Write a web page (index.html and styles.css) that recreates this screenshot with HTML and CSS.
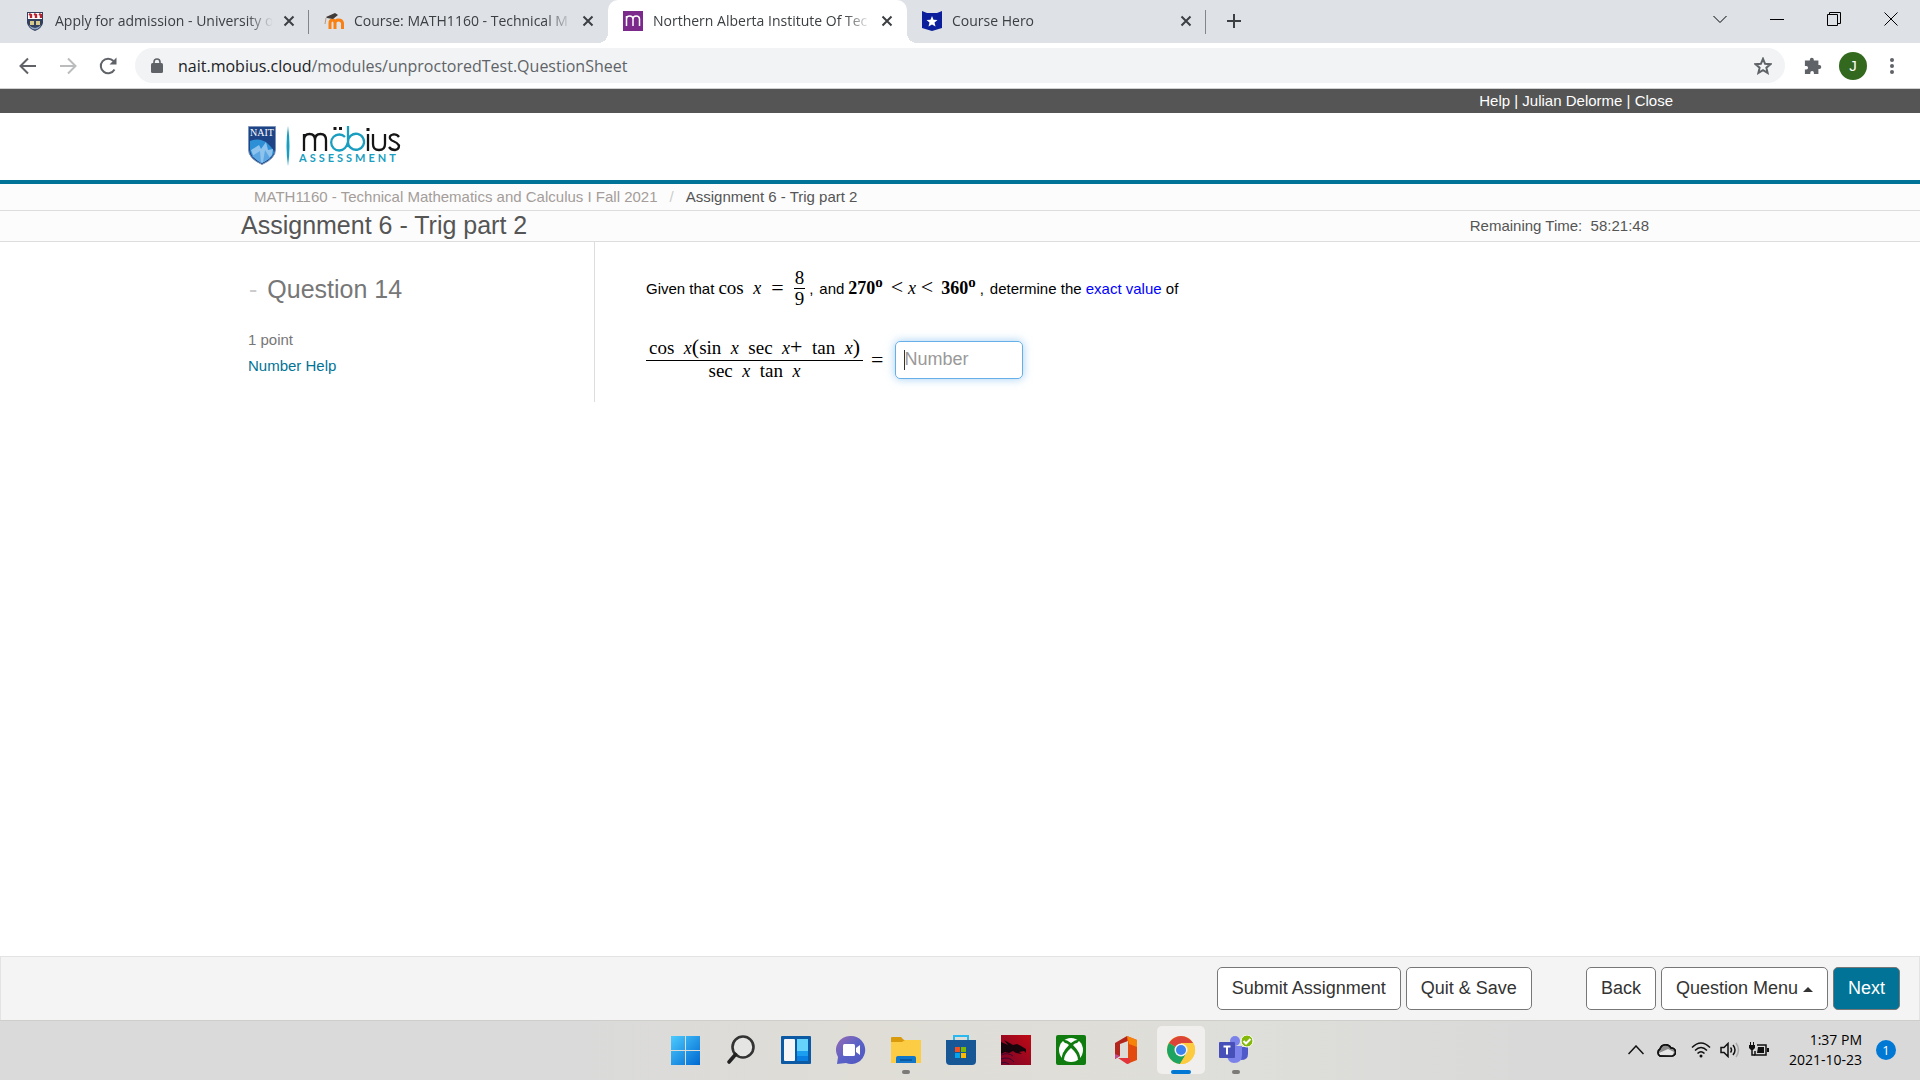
FILE: index.html
```
<!DOCTYPE html>
<html lang="en">
<head>
    <meta charset="UTF-8">
    <meta name="viewport" content="width=device-width, initial-scale=1.0">
    <title>Northern Alberta Institute Of Technology</title>
    <link rel="stylesheet" href="styles.css">
</head>
<body>

    <!-- Browser tabs -->
    <header class="tab-strip">
        <div class="tab">
            <svg class="favicon" viewBox="0 0 20 20"><path d="M2 1h16v11q-1 5-8 8q-7-3-8-8z" fill="#33415f"/><path d="M3 2h14v6H3z" fill="#fff"/><path d="M4 3l2 1v3M9 3l2 1v3M14 3l2 1v3" stroke="#b8202e" stroke-width="2.4" fill="none"/><path d="M5 10h4v4H5zM11 10h4v4h-4z" fill="#d8c98d"/><path d="M4 14q6 6 12 0l-1 2q-5 5-10 0z" fill="#8fa3c4"/></svg>
            <span class="tab-title">Apply for admission - University o</span>
            <button class="tab-close" aria-label="Close tab"><svg viewBox="0 0 12 12"><path d="M1.500 1.500l9 9M10.500 1.500l-9 9"/></svg></button>
        </div>
        <div class="tab">
            <svg class="favicon" viewBox="0 0 20 20"><path d="M6 18v-6q0-3 2.500-3T11 12v6M11 18v-6q0-3 3.500-3t4 3v6" fill="none" stroke="#f98012" stroke-width="3"/><path d="M2 6l9-4 3 2-5 4-6-1z" fill="#3f3a38"/><path d="M2 7l-1 6" stroke="#b89a80"/></svg>
            <span class="tab-title">Course: MATH1160 - Technical M</span>
            <button class="tab-close" aria-label="Close tab"><svg viewBox="0 0 12 12"><path d="M1.500 1.500l9 9M10.500 1.500l-9 9"/></svg></button>
        </div>
        <div class="tab active">
            <svg class="favicon" viewBox="0 0 20 20"><path d="M0 0h20v20H0z" fill="#7b2a8c"/><path d="M3.500 15V5M3.500 8q0-3 3.200-3T10 8v7M10 8q0-3 3.200-3t3.300 3v7" fill="none" stroke="#fff" stroke-width="1.500"/></svg>
            <span class="tab-title">Northern Alberta Institute Of Tec</span>
            <button class="tab-close" aria-label="Close tab"><svg viewBox="0 0 12 12"><path d="M1.500 1.500l9 9M10.500 1.500l-9 9"/></svg></button>
        </div>
        <div class="tab">
            <svg class="favicon" viewBox="0 0 20 20"><path d="M0 0l5 2h10l5-2v17l-10 3-10-3z" fill="#0b1f9c"/><path d="M10 5l1.500 3.700 4 .3-3 2.600 1 3.900-3.500-2.100-3.500 2.100 1-3.900-3-2.600 4-.3z" fill="#fff"/></svg>
            <span class="tab-title">Course Hero</span>
            <button class="tab-close" aria-label="Close tab"><svg viewBox="0 0 12 12"><path d="M1.500 1.500l9 9M10.500 1.500l-9 9"/></svg></button>
        </div>
        <button class="new-tab" aria-label="New tab"><svg viewBox="0 0 16 16"><path d="M8 1v14M1 8h14"/></svg></button>
        <div class="window-controls">
            <button aria-label="Search tabs"><svg viewBox="0 0 14 14"><path d="M.5 4l6.500 6.500L13.500 4"/></svg></button>
            <button aria-label="Minimize"><svg viewBox="0 0 14 14"><path d="M0 7.500h14"/></svg></button>
            <button aria-label="Restore"><svg viewBox="0 0 14 14"><path d="M.5 2.500h10v11H.5zM2.500 2.500v-2h11v11h-3"/></svg></button>
            <button aria-label="Close window"><svg viewBox="0 0 14 14"><path d="M.5.5l13 13M13.500.5l-13 13"/></svg></button>
        </div>
    </header>

    <!-- Address bar -->
    <nav class="toolbar">
        <button class="tool" aria-label="Back"><svg viewBox="0 0 20 20"><path d="M18 10H3M10 2.500L2.500 10l7.500 7.500"/></svg></button>
        <button class="tool disabled" aria-label="Forward"><svg viewBox="0 0 20 20"><path d="M2 10h15M10 2.500l7.500 7.500-7.500 7.500"/></svg></button>
        <button class="tool" aria-label="Reload"><svg viewBox="0 0 20 20"><path d="M16.500 13.500A7.300 7.300 0 1 1 15.500 5"/><path d="M18.500 1.500v7h-7z" fill="#5f6368" stroke="none"/></svg></button>
        <div class="address">
            <svg class="lock" viewBox="0 0 12 16"><rect y="5" width="12" height="10" rx="1.500" fill="#5f6368"/><path d="M3 6V4a3 3 0 0 1 6 0v2" fill="none" stroke="#5f6368" stroke-width="1.600"/></svg>
            <span class="url"><b>nait.mobius.cloud</b>/modules/unproctoredTest.QuestionSheet</span>
            <button class="bookmark" aria-label="Bookmark"><svg viewBox="0 0 18 18"><path d="M9 1.800l2.100 5 5.300.4-4 3.500 1.200 5.200L9 13.100l-4.600 2.800 1.200-5.200-4-3.500 5.300-.4z"/></svg></button>
        </div>
        <button class="puzzle" aria-label="Extensions"><svg viewBox="0 0 20 20"><path d="M1 4h5.500V3a2.200 2.200 0 0 1 4.400 0v1H16v5h1a2.200 2.200 0 0 1 0 4.400h-1V19h-5v-1.500a2 2 0 0 0-4 0V19H1v-5h1.500a2 2 0 0 0 0-4H1z"/></svg></button>
        <button class="avatar">J</button>
        <button class="more" aria-label="Menu"><i></i><i></i><i></i></button>
    </nav>

    <div class="account-bar">
        <a href="#">Help</a> | <a href="#">Julian Delorme</a> | <a href="#">Close</a>
    </div>

    <div class="brand">
        <svg class="shield" viewBox="0 0 28 39"><path d="M.5.5h27v23q0 9-13.500 15Q.5 32.500.5 23.500z" fill="#1c4486" stroke="#7d93b8"/><path d="M2 15q10-4 17 2t7 10q-3 6-12 10Q2 32 2 23z" fill="#2d8fd6"/><path d="M3 24l8-5 2 4 5-7 2 8 5-1-1 6q-3 4-10 8Q5 33 3 24z" fill="#8ec3ee"/><path d="M4 30l8-5 1 12zM17 24l5 8-7 4z" fill="#5ba6e2"/><text x="14" y="10" text-anchor="middle" class="shield-text">NAIT</text></svg>
        <svg class="divider" viewBox="0 0 4 40"><path d="M2 0q3 20 0 40Q-1 20 2 0" fill="#1a9ec0"/></svg>
        <div class="wordmark">
            <svg viewBox="0 0 100 26" fill="none" stroke="#151515" stroke-width="2.300" role="img" aria-label="möbius"><path d="M2 25V8M2 14q0-6 5.500-6T13 14v11M13 14q0-6 5.500-6T24 14v11"/><path d="M43 11a8 8 0 1 0 0 11q2-2 3-6a8 8 0 1 1 3 6q-3-2-3-6V0" stroke="#1a9ec0"/><path d="M66 8v17M71 8v10q0 6 6 6t6-6V8M97 11q-2-3-6-2.500-4 1-3 4 1 2 4 3t5 4q0 4-4 4.500-4 0-6-3"/><path d="M66 2v3M33 1v3M38.500 1v3" stroke-width="3"/></svg>
            <span>ASSESSMENT</span>
        </div>
    </div>

    <div class="breadcrumb"><a href="#">MATH1160 - Technical Mathematics and Calculus I Fall 2021</a><i>/</i><span>Assignment 6 - Trig part 2</span></div>

    <div class="title-bar">
        <h1>Assignment 6 - Trig part 2</h1>
        <div class="timer">Remaining Time: &nbsp;58:21:48</div>
    </div>

    <main class="content">
        <aside class="question-info">
            <h2><i>-</i>Question 14</h2>
            <p>1 point</p>
            <a href="#">Number Help</a>
        </aside>
        <section class="question">
            <div class="prompt">
                <span>Given that</span>
                <span class="math">cos&ensp;<em>x</em></span>
                <span class="math equals">=</span>
                <span class="math fraction"><span>8</span><span>9</span></span>
                <span class="comma">,</span>
                <span>and</span>
                <span class="math strong">270<sup>o</sup></span>
                <span class="math inequality"><b>&lt;</b> <em>x</em> <b>&lt;</b></span>
                <span class="math strong">360<sup>o</sup></span>
                <span class="comma">,</span>
                <span>determine the <a href="#">exact value</a> of</span>
            </div>
            <div class="answer">
                <label class="math fraction expression" for="answer">
                    <span>cos&ensp;<em>x</em><b>(</b>sin&ensp;<em>x</em>&ensp;sec&ensp;<em>x</em><b>+</b>&ensp;tan&ensp;<em>x</em><b>)</b></span>
                    <span>sec&ensp;<em>x</em>&ensp;tan&ensp;<em>x</em></span>
                </label>
                <span class="math equals">=</span>
                <input type="text" id="answer" class="number-input" placeholder="Number" autofocus>
            </div>
        </section>
    </main>

    <footer class="actions">
        <button class="btn">Submit Assignment</button>
        <button class="btn">Quit &amp; Save</button>
        <button class="btn back">Back</button>
        <button class="btn">Question Menu <i class="caret"></i></button>
        <button class="btn primary">Next</button>
    </footer>

    <!-- Windows taskbar -->
    <div class="taskbar">
        <div class="apps">
            <button class="app" aria-label="Start"><svg viewBox="0 0 30 30"><defs><linearGradient id="win" x2="1" y2="1"><stop stop-color="#4ccbff"/><stop offset="1" stop-color="#0068d0"/></linearGradient></defs><path d="M0 1h14v14H0zM15 1h14v14H15zM0 16h14v14H0zM15 16h14v14H15z" fill="url(#win)"/></svg></button>
            <button class="app" aria-label="Search"><svg viewBox="0 0 30 30"><circle cx="17" cy="12" r="10.500" fill="#e5e5e4" stroke="#333" stroke-width="2.600"/><path d="M9.500 19.500L3 27" stroke="#222" stroke-width="3.600" stroke-linecap="round"/></svg></button>
            <button class="app" aria-label="Widgets"><svg viewBox="0 0 30 30"><rect y="1" width="30" height="28" rx="1" fill="#0c59a4"/><rect x="3" y="4" width="11" height="22" rx="1" fill="#f6f6f6"/><path d="M16 4h11v12H16z" fill="#66d3fa"/><path d="M16 16h11v5H16z" fill="#1b9df0"/><path d="M16 21h11v5H16z" fill="#0a7fe2"/></svg></button>
            <button class="app" aria-label="Chat"><svg viewBox="0 0 30 30"><defs><linearGradient id="chat" x2="1" y2="1"><stop stop-color="#9a6bb0"/><stop offset=".5" stop-color="#5b62c7"/><stop offset="1" stop-color="#4d55c0"/></linearGradient></defs><path d="M15 1a14 14 0 1 1-5 27l-9 1 1-7A14 14 0 0 1 15 1z" fill="url(#chat)"/><rect x="7" y="9" width="12" height="12" rx="1.500" fill="#fff"/><path d="M20 13l4-3v10l-4-3z" fill="#fff"/></svg></button>
            <button class="app running" aria-label="File Explorer"><svg viewBox="0 0 30 30"><path d="M0 3q0-1 1-1h9l3 3h17v8H0z" fill="#d99b0c"/><path d="M0 7h11l3-2h16v23H0z" fill="#fccc45"/><path d="M5 28v-5q0-2 2-2h16q2 0 2 2v5z" fill="#1177c9"/><path d="M9 25h12" stroke="#0a4f94" stroke-width="1.500"/></svg></button>
            <button class="app" aria-label="Microsoft Store"><svg viewBox="0 0 30 30"><path d="M8 6V1h14v5" fill="none" stroke="#27b9f0" stroke-width="2"/><path d="M0 5h30v21q0 4-4 4H4q-4 0-4-4z" fill="#175796"/><path d="M9 12h5v5H9z" fill="#f25022"/><path d="M15 12h5v5h-5z" fill="#7fba00"/><path d="M9 18h5v5H9z" fill="#00a4ef"/><path d="M15 18h5v5h-5z" fill="#ffb900"/></svg></button>
            <button class="app" aria-label="Dragon"><svg viewBox="0 0 30 30"><defs><linearGradient id="dragon" x1="1" x2="0" y2="1"><stop stop-color="#c00a14"/><stop offset="1" stop-color="#780528"/></linearGradient></defs><path d="M0 0h30v30H0z" fill="url(#dragon)"/><path d="M0 7l7 3-4-5 9 5 4-1 4 2 5 3 0 4-2-2-5 1 3 2-6-1-3-2-4 2-4-1-4 2z" fill="#16060c"/><path d="M0 20q7-3 12 1M0 24q8-3 13 3M0 28q4-2 8 1" stroke="#3d0630" fill="none"/></svg></button>
            <button class="app" aria-label="Xbox"><svg viewBox="0 0 30 30"><rect width="30" height="30" rx="2" fill="#107c10"/><circle cx="15" cy="15" r="12" fill="#fff"/><path d="M6 5q4-1 9 3 5-4 9-3l-3 3q-2 0-4 2 8 8 7 14l-2 1q0-6-7-12-7 6-7 12l-2-1q-1-6 7-14-2-2-4-2z" fill="#107c10"/></svg></button>
            <button class="app" aria-label="Office"><svg viewBox="0 0 30 30"><path d="M4 8L16 1v6l-7 3v11l-5 3z" fill="#b3261e"/><path d="M4 19l5 2-5 3z" fill="#c24b92"/><path d="M16 1l10 4v20l-10 4z" fill="#e24a0e"/><path d="M16 1l10 4v7l-8-3z" fill="#f7840a"/><path d="M9 9l8-3v17H9z" fill="#dedcd9"/><path d="M7 23h12v5l-3 1z" fill="#e3343b"/></svg></button>
            <button class="app current" aria-label="Chrome"><svg viewBox="0 0 30 30"><circle cx="15" cy="15" r="14" fill="#fbc934"/><path d="M15 15L2.900 8A14 14 0 0 1 27.100 8H15z" fill="#dc4437"/><path d="M15 15L2.900 8a14 14 0 0 0 11.100 21l7-12z" fill="#1da462"/><path d="M15 8h12.100A14 14 0 0 1 14 29l7-11z" fill="#fdcb3f"/><circle cx="15" cy="15" r="6.500" fill="#f5f3f0"/><circle cx="15" cy="15" r="5" fill="#3d82ee"/></svg></button>
            <button class="app running" aria-label="Teams"><svg viewBox="0 0 36 30"><circle cx="17" cy="6" r="5" fill="#7b83eb"/><path d="M20 12h10v7q0 6-7 6z" fill="#5059c9"/><path d="M9 11h15v9q0 8-8 8-6 0-7-8z" fill="#7b83eb"/><rect x="1" y="7" width="16" height="16" rx="1" fill="#4650b8"/><path d="M5.500 11.500h7M9 11.500v8" stroke="#fff" stroke-width="2"/><circle cx="29" cy="6" r="6" fill="#84b80b" stroke="#fff"/><path d="M25.500 6l2.500 2.500 4.500-4.500" fill="none" stroke="#fff" stroke-width="2"/></svg></button>
        </div>
        <div class="tray">
            <svg class="tray-up" viewBox="0 0 16 10"><path d="M.5 9L8 1l7.500 8"/></svg>
            <svg class="tray-cloud" viewBox="0 0 20 16"><path d="M4 14a4 4 0 0 1 0-7 6 6 0 0 1 11-1 4 4 0 0 1 1 8z" fill="#8c8c8c"/><path d="M4 13l-1-2 9-4 6 3-2 4z" fill="#e7e7e7" stroke="none"/><path d="M4 14a4 4 0 0 1 0-7 6 6 0 0 1 11-1 4 4 0 0 1 1 8z"/></svg>
            <svg class="tray-wifi" viewBox="0 0 20 16"><path d="M1 5.500q9-9 18 0M4 8.500q6-6 12 0M6.500 11.500q3.500-3.500 7 0"/><circle cx="10" cy="14" r="1.500" fill="#111" stroke="none"/></svg>
            <svg class="tray-sound" viewBox="0 0 20 16"><path d="M1 5.500h3l4-4v13l-4-4H1zM10.500 5.500q2 2.500 0 5M13 3q4 5 0 10"/><path d="M16 1q5 7 0 14" stroke="#aaa"/></svg>
            <svg class="tray-battery" viewBox="0 0 20 16"><path d="M8 3h9v10H6V9"/><path d="M9 5h6v6H8zM18 6h2v4h-2zM0 3h6v3L4 8H2L0 6zM1 0h1v3H1zM4 0h1v3H4z" fill="#111" stroke="none"/><path d="M3 8v5h3"/></svg>
            <div class="clock">1:37 PM<br>2021-10-23</div>
            <span class="badge">1</span>
        </div>
    </div>

</body>
</html>
```
FILE: styles.css
```
* {
    box-sizing: border-box;
}

body {
    margin: 0;
    min-height: 100vh;
    display: flex;
    flex-direction: column;
    font-family: "Liberation Sans", Arial, sans-serif;
    font-size: 15px;
    color: #000;
    background-color: #fff;
}

a {
    color: inherit;
    text-decoration: none;
}

i {
    font-style: normal;
}

button {
    font-family: inherit;
    padding: 0;
    border: none;
    background: none;
    cursor: pointer;
}

svg {
    display: block;
    flex: none;
}

.tab-strip {
    height: 43px;
    display: flex;
    align-items: stretch;
    padding-left: 10px;
    background-color: #dee1e6;
    font-family: "Open Sans", "Noto Sans", sans-serif;
}

.tab {
    width: 299px;
    display: flex;
    align-items: center;
    padding: 0 14px 2px 15px;
    position: relative;
    color: #3c4043;
    font-size: 14px;
}

.tab:first-child::after,
.tab:nth-child(4)::after {
    content: "";
    position: absolute;
    right: 0;
    top: 10px;
    width: 1px;
    height: 24px;
    background-color: #80868b;
}

.tab.active {
    background-color: #fff;
    border-radius: 10px 10px 0 0;
}

.tab.active::before,
.tab.active::after {
    content: "";
    position: absolute;
    bottom: 0;
    width: 10px;
    height: 10px;
}

.tab.active::before {
    left: -10px;
    background: radial-gradient(circle at 0 0, transparent 10px, #fff 10px);
}

.tab.active::after {
    right: -10px;
    background: radial-gradient(circle at 100% 0, transparent 10px, #fff 10px);
}

.favicon {
    width: 20px;
    height: 20px;
    margin-right: 10px;
}

.tab-title {
    flex: 1;
    overflow: hidden;
    white-space: nowrap;
    line-height: 24px;
    margin-right: 10px;
    mask-image: linear-gradient(to right, #000 88%, transparent);
}

.tab-close {
    width: 12px;
    height: 12px;
}

.tab-close svg,
.new-tab svg {
    width: 100%;
    stroke: #3c4043;
    stroke-width: 2;
}

.new-tab {
    width: 16px;
    margin-left: 20px;
    padding-bottom: 2px;
}

.window-controls {
    margin-left: auto;
    margin-right: 1px;
    display: flex;
}

.window-controls button {
    width: 57px;
    display: flex;
    align-items: center;
    justify-content: center;
    padding-bottom: 6px;
}

.window-controls svg {
    width: 14px;
    fill: none;
    stroke: #000;
}

.toolbar {
    height: 46px;
    display: flex;
    align-items: center;
    padding: 0 18px;
    border-bottom: 1px solid #d0d0d0;
}

.tool {
    width: 20px;
    margin-right: 20px;
}

.tool:nth-child(3) {
    margin-right: 17px;
}

.tool svg {
    fill: none;
    stroke: #5f6368;
    stroke-width: 2;
}

.tool.disabled svg {
    stroke: #babcbe;
}

.address {
    flex: 1;
    height: 35px;
    display: flex;
    align-items: center;
    padding: 0 13px 0 16px;
    border-radius: 18px;
    background-color: #f1f3f4;
}

.lock {
    width: 12px;
    margin-right: 15px;
}

.url {
    flex: 1;
    font-family: "Open Sans", "Noto Sans", sans-serif;
    font-size: 16px;
    color: #5f6368;
}

.url b {
    font-weight: normal;
    color: #202124;
}

.bookmark,
.puzzle {
    width: 18px;
}

.bookmark svg {
    fill: none;
    stroke: #5f6368;
    stroke-width: 2;
}

.puzzle {
    margin-left: 19px;
}

.puzzle svg {
    fill: #5f6368;
}

.avatar {
    width: 28px;
    height: 28px;
    margin-left: 17px;
    border-radius: 50%;
    background-color: #33691e;
    color: #fff;
    font-size: 15px;
}

.more {
    width: 4px;
    margin: 0 8px 0 23px;
}

.more i {
    display: block;
    width: 4px;
    height: 4px;
    margin: 2px 0;
    border-radius: 50%;
    background-color: #5f6368;
}

.account-bar {
    height: 24px;
    line-height: 24px;
    padding-right: 247px;
    text-align: right;
    background-color: #555;
    color: #fff;
}

.brand {
    height: 71px;
    display: flex;
    align-items: flex-start;
    padding: 13px 248px 0;
    border-bottom: 4px solid #007396;
}

.shield {
    width: 28px;
    height: 39px;
}

.shield-text {
    font-family: "Liberation Serif", serif;
    font-size: 10px;
    fill: #fff;
}

.divider {
    width: 4px;
    height: 40px;
    margin: 0 9px 0 10px;
}

.wordmark svg {
    width: 100px;
    height: 26px;
    margin-left: 3px;
}

.wordmark span {
    display: block;
    color: #1a9ec0;
    font-family: Lato, sans-serif;
    font-size: 11px;
    font-weight: bold;
    line-height: 12px;
    letter-spacing: 3px;
}

.breadcrumb {
    height: 27px;
    line-height: 26px;
    padding-left: 254px;
    border-bottom: 1px solid #ddd;
    background-color: #fcfcfc;
    color: #555;
}

.breadcrumb a {
    color: #a49d9a;
}

.breadcrumb i {
    color: #ccc;
    margin: 0 12px;
}

.title-bar {
    height: 31px;
    display: flex;
    justify-content: space-between;
    align-items: center;
    padding: 0 271px 2px 241px;
    border-bottom: 1px solid #ddd;
    background-color: #fcfcfc;
    color: #555;
}

.title-bar h1 {
    margin: 0;
    font-size: 25px;
    font-weight: normal;
    line-height: 28px;
}

.content {
    flex: 1;
    display: flex;
    align-items: flex-start;
    padding-left: 248px;
}

.question-info {
    width: 347px;
    height: 160px;
    padding-top: 31px;
    border-right: 1px solid #ddd;
    color: #777;
}

.question-info h2 {
    margin: 0 0 22px;
    font-size: 25px;
    font-weight: normal;
    line-height: 32px;
}

.question-info h2 i {
    color: #ccc;
    margin: 0 10px 0 1px;
}

.question-info p {
    margin: 0;
    line-height: 26px;
}

.question-info a {
    color: #007396;
    line-height: 26px;
}

.question {
    padding: 24px 0 0 51px;
}

.prompt,
.answer {
    display: flex;
    align-items: center;
}

.prompt {
    height: 44px;
}

.prompt a {
    color: #00f;
}

.math {
    font-family: "Liberation Serif", serif;
    font-size: 19px;
    margin: 0 4px;
}

.math b {
    font-size: 22px;
    font-weight: normal;
    line-height: 16px;
}

.math em {
    font-size: 18px;
}

.equals {
    font-size: 22px;
    margin: 0 6px;
}

.strong {
    font-size: 18px;
    font-weight: bold;
}

.strong sup {
    line-height: 0;
}

.fraction {
    display: flex;
    flex-direction: column;
    text-align: center;
    line-height: 20px;
}

.fraction > span {
    padding: 0 1px;
}

.fraction > span + span {
    border-top: 1px solid #000;
}

.comma {
    margin-right: 6px;
}

.answer {
    margin-top: 28px;
}

.expression {
    margin: 0 2px 0 0;
    white-space: nowrap;
}

.expression > span {
    padding: 0 3px;
}

.expression > span:first-child {
    padding-bottom: 2px;
}

.number-input {
    width: 128px;
    height: 38px;
    margin-left: 5px;
    padding: 0 9px;
    border: 1px solid #66afe9;
    border-radius: 5px;
    outline: none;
    background: linear-gradient(#333, #333) 8px center / 1px 20px no-repeat;
    caret-color: transparent;
    box-shadow: 0 0 10px rgba(102, 175, 233, 0.6);
    font-family: inherit;
    font-size: 18px;
}

.number-input::placeholder {
    color: #999;
}

.actions {
    height: 64px;
    display: flex;
    justify-content: flex-end;
    align-items: flex-start;
    gap: 5px;
    padding: 10px 19px 0;
    border: 1px solid #e3e3e3;
    border-bottom: none;
    background-color: #f4f4f4;
}

.btn {
    height: 43px;
    padding: 0 14px;
    border: 1px solid #777;
    border-radius: 5px;
    background-color: #fff;
    color: #333;
    font-size: 18px;
}

.btn.back {
    margin-left: 49px;
}

.btn.primary {
    background-color: #007396;
    color: #fff;
}

.caret {
    display: inline-block;
    border: 5px solid transparent;
    border-top: none;
    border-bottom-color: #333;
    vertical-align: 2px;
}

.taskbar {
    height: 60px;
    display: flex;
    align-items: center;
    justify-content: flex-end;
    position: relative;
    padding-bottom: 2px;
    border-top: 1px solid #cfcecb;
    background: linear-gradient(to right, #dadada 30%, #dfddd6 45%, #dededa 65%, #d9d9d9 80%);
    font-family: "Open Sans", "Noto Sans", sans-serif;
}

.apps {
    position: absolute;
    left: 50%;
    transform: translateX(-50%);
    display: flex;
    gap: 7px;
    padding-left: 2px;
}

.app {
    width: 48px;
    height: 48px;
    display: flex;
    align-items: center;
    justify-content: center;
    position: relative;
    border-radius: 5px;
}

.app svg {
    height: 30px;
}

.app.current {
    background-color: #f0efed;
}

.app.running::after,
.app.current::after {
    content: "";
    position: absolute;
    bottom: 0;
    width: 8px;
    height: 4px;
    border-radius: 2px;
    background-color: #7d7b78;
}

.app.current::after {
    width: 20px;
    background-color: #0078d4;
}

.tray {
    display: flex;
    align-items: center;
    padding-right: 24px;
}

.tray svg {
    width: 20px;
    fill: none;
    stroke: #111;
    stroke-width: 1.5;
    margin-right: 9px;
}

.tray .tray-up {
    width: 16px;
    margin-right: 12px;
}

.tray .tray-cloud {
    margin-right: 15px;
}

.clock {
    width: 84px;
    text-align: right;
    font-size: 14px;
    line-height: 20px;
}

.badge {
    width: 20px;
    height: 20px;
    margin-left: 14px;
    border-radius: 50%;
    background-color: #0078d4;
    color: #fff;
    font-size: 13px;
    line-height: 20px;
    text-align: center;
}
```
